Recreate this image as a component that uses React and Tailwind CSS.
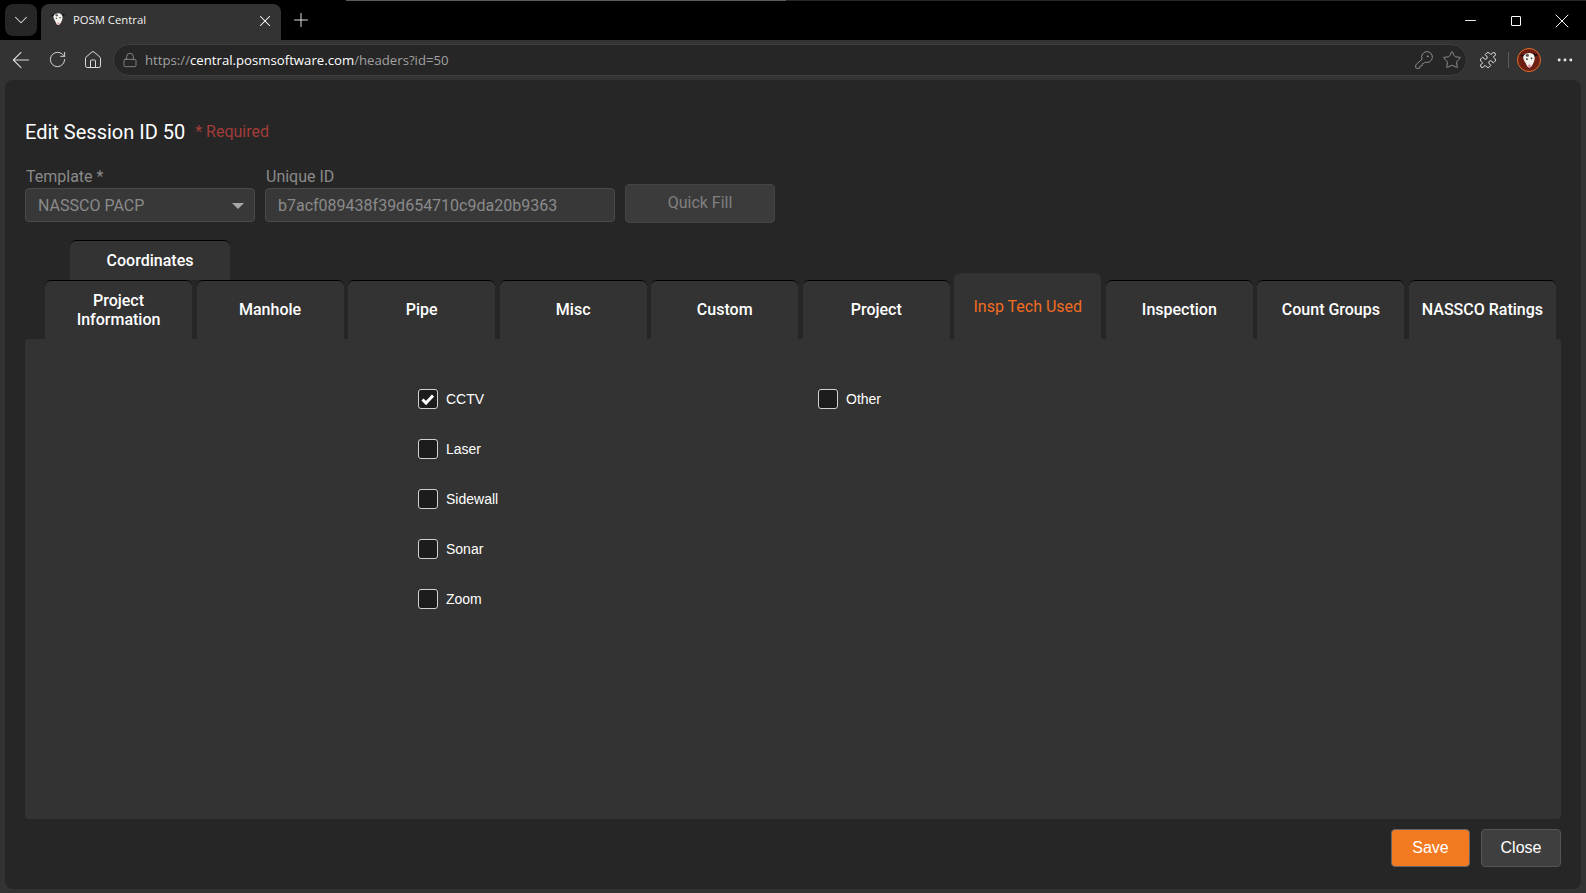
import { ArrowLeft, ChevronDown, Ellipsis, House, KeyRound, Lock, Minus, Plus, Puzzle, RotateCw, Star, X } from 'lucide-react';

/* ── Data ─────────────────────────────────────────────── */
const TABS = [
  { label: 'Project Information', wraps: true },
  { label: 'Manhole' },
  { label: 'Pipe' },
  { label: 'Misc' },
  { label: 'Custom' },
  { label: 'Project' },
  { label: 'Insp Tech Used', active: true },
  { label: 'Inspection' },
  { label: 'Count Groups' },
  { label: 'NASSCO Ratings' },
];

const LEFT_CHECKS = [
  { label: 'CCTV', checked: true },
  { label: 'Laser' },
  { label: 'Sidewall' },
  { label: 'Sonar' },
  { label: 'Zoom' },
];

/* ── Possum face, used for favicon and profile ────────── */
const Possum = ({ className }) => (
  <svg viewBox="0 0 24 24" className={className}>
    <path d="M1 7 L6 5 L7 9 Z" fill="#111" />
    <path d="M23 6 L17 4 L17 9 Z" fill="#111" />
    <path d="M5 8 C7 3 15 2 18 6 C20 10 18 15 16 18 C14 22 11 22 9.5 19 C8 15 5 12 5 8 Z" fill="#f4f1ec" />
    <ellipse cx="10" cy="6.5" rx="2" ry="1.6" fill="#555" />
    <circle cx="9.5" cy="11" r="1" fill="#222" />
    <circle cx="15" cy="10" r="1" fill="#222" />
    <circle cx="12.5" cy="19" r="1.7" fill="#e58fa0" />
  </svg>
);

/* ── Browser chrome ───────────────────────────────────── */
const TabStrip = () => (
  <div className="h-10 shrink-0 bg-black flex flex-col">
    {/* Strip of another window peeking in above the tabs */}
    <div className="h-px shrink-0 flex bg-[#262626]">
      <div className="w-[346px] bg-black" />
      <div className="w-[440px] bg-[#5c5c5c]" />
    </div>
    <div className="flex-1 flex items-start">
      <div className="ml-[5px] mt-[3px] w-[32px] h-[32px] rounded-lg bg-[#262626] flex items-center justify-center">
        <ChevronDown size={22} strokeWidth={1.1} className="text-[#e0e0e0]" />
      </div>
      <div className="ml-[4px] mt-[3px] w-[240px] h-9 rounded-t-lg bg-[#333333] flex items-center pl-[9px] pr-[7px] pb-[3px]">
        <Possum className="w-[16px] h-[16px] -mt-[3px]" />
        <span className="ml-[7px] flex-1 text-[11.3px] text-[#f0f0f0] font-['Open_Sans',sans-serif]">POSM Central</span>
        <X size={18} strokeWidth={1.4} className="text-white" />
      </div>
      <div className="ml-[8px] mt-[7px] w-[24px] h-[24px] flex items-center justify-center">
        <Plus size={22} strokeWidth={1.1} className="text-[#e0e0e0]" />
      </div>
      <div className="ml-auto flex items-center h-[39px] text-white">
        <div className="w-[46px] flex justify-center"><Minus size={17} strokeWidth={1.3} /></div>
        <div className="w-[46px] flex justify-center">
          <div className="w-[10px] h-[10px] border border-white rounded-[1px]" />
        </div>
        <div className="w-[46px] mr-[1px] flex justify-center"><X size={24} strokeWidth={1} /></div>
      </div>
    </div>
  </div>
);

const Toolbar = () => (
  <div className="h-[39px] shrink-0 bg-[#333333] flex items-center text-[#dcdcdc]">
    <div className="w-[41px] flex justify-center"><ArrowLeft size={26} strokeWidth={1} /></div>
    <div className="w-[32px] flex justify-center"><RotateCw size={19} strokeWidth={1.2} /></div>
    <div className="w-[40px] flex justify-center"><House size={20} strokeWidth={1.2} /></div>
    <div className="w-[1354px] h-[32px] rounded-full bg-[#262626] border border-[#3f3f3f] flex items-center">
      <div className="w-[31px] flex justify-center"><Lock size={16} strokeWidth={1.1} className="text-[#a0a0a0]" /></div>
      <span className="flex-1 pt-[2px] text-[13.2px] text-[#a0a0a0] font-['Open_Sans',sans-serif]">
        https://<span className="text-white">central.posmsoftware.com</span>/headers?id=50
      </span>
      <div className="w-[28px] flex justify-center"><KeyRound size={20} strokeWidth={1} className="text-[#a0a0a0]" /></div>
      <div className="w-[28px] flex justify-center"><Star size={20} strokeWidth={1} className="text-[#a0a0a0]" /></div>
    </div>
    <div className="w-[41px] flex justify-center"><Puzzle size={18} strokeWidth={1.2} className="text-[#f0f0f0]" /></div>
    <div className="w-px h-[16px] bg-[#5a5a5a]" />
    <div className="w-[40px] flex justify-center">
      <div className="w-[24px] h-[24px] rounded-full bg-[#6e1f14] border border-[#e0702a] flex items-center justify-center">
        <Possum className="w-[20px] h-[20px]" />
      </div>
    </div>
    <div className="w-[32px] flex justify-center"><Ellipsis size={20} strokeWidth={1.5} className="text-[#f0f0f0]" /></div>
  </div>
);

/* ── Form bits ────────────────────────────────────────── */
const Field = ({ label, className, children }) => (
  <div className={className}>
    <div className="h-[20px] leading-[20px] pl-[1px] text-[16px] text-[#8a8a8a]">{label}</div>
    {children}
  </div>
);

const Check = ({ label, checked }) => (
  <label className="h-[20px] flex items-center">
    <span className="shrink-0 w-[20px] h-[20px] rounded-[3px] border border-[#d0d0d0] bg-[#1c1c1c] flex items-center justify-center">
      {checked && (
        <svg viewBox="0 0 14 14" className="w-[14px] h-[14px]">
          <path d="M1.5 7.5 L5 11 L12 3.5" fill="none" stroke="#fff" strokeWidth="3" />
        </svg>
      )}
    </span>
    <span className="ml-[8px] text-[14px] text-white font-['Liberation_Sans',sans-serif]">{label}</span>
  </label>
);

const Tab = ({ label, active, wraps }) => (
  <div
    className={`${active ? 'h-[66px] text-[#f26c22] border-t-[#2f2f2f]' : 'h-[59px] text-white font-[470] border-t-black'} ${wraps || active ? '' : 'pb-[2px]'}
      flex-1 min-w-0 rounded-t-[6px] border-t bg-[#333333] flex items-center justify-center text-center text-[16px] leading-[19px] px-3`}
  >
    {label}
  </div>
);

/* ── App ──────────────────────────────────────────────── */
export default function App() {
  return (
    <div className="w-[1586px] h-[893px] overflow-hidden flex flex-col bg-[#333333] font-['Roboto',sans-serif]">
      <TabStrip />
      <Toolbar />

      <main className="flex-1 mx-[5px] mt-[1px] mb-[4px] rounded-[8px] bg-[#262626] pl-[20px] pr-[20px] flex flex-col">
        <div className="mt-[39px] h-[26px] flex items-center">
          <h1 className="text-[20px] text-white">Edit Session ID 50</h1>
          <span className="ml-[10px] text-[16px] text-[#a33c38]">* Required</span>
        </div>

        <div className="mt-[22px] flex items-end">
          <Field label="Template *" className="w-[230px]">
            <div className="mt-[1px] h-[34px] pt-[2px] rounded-[4px] bg-[#383838] border border-[#4a4a4a] pl-[12px] pr-[10px] flex items-center justify-between text-[16px] text-[#8a8a8a]">
              NASSCO PACP
              <span className="w-0 h-0 border-x-[6px] border-x-transparent border-t-[6px] border-t-[#a8a8a8]" />
            </div>
          </Field>
          <Field label="Unique ID" className="ml-[10px] w-[350px]">
            <div className="mt-[1px] h-[34px] pt-[2px] rounded-[4px] bg-[#383838] border border-[#4a4a4a] px-[12px] flex items-center text-[16px] text-[#8a8a8a]">
              b7acf089438f39d654710c9da20b9363
            </div>
          </Field>
          <button className="ml-[10px] w-[150px] h-[39px] mb-[-1px] rounded-[4px] bg-[#3b3b3b] border border-[#444444] text-[16px] text-[#808080] pb-[1px]">
            Quick Fill
          </button>
        </div>

        <div className="mt-[18px] ml-[45px] w-[160px] h-[40px] rounded-t-[6px] border-t border-t-black bg-[#333333] flex items-center justify-center text-[16px] font-[470] text-white">
          Coordinates
        </div>

        <div className="h-[59px] flex items-end gap-[4.5px] ml-[20px] mr-[5px]">
          {TABS.map((tab) => <Tab key={tab.label} {...tab} />)}
        </div>

        <section className="flex-1 rounded-[4px] bg-[#333333] pt-[50px] pl-[393px] flex">
          <div className="w-[400px] flex flex-col gap-[30px] whitespace-nowrap">
            {LEFT_CHECKS.map((c) => <Check key={c.label} {...c} />)}
          </div>
          <div className="whitespace-nowrap">
            <Check label="Other" />
          </div>
        </section>

        <footer className="h-[70px] shrink-0 flex items-start justify-end gap-[11px] pt-[10px] font-['Liberation_Sans',sans-serif]">
          <button className="w-[79px] h-[38px] rounded-[4px] bg-[#f37a21] border border-[#666666] text-[16px] text-white">Save</button>
          <button className="w-[80px] h-[38px] rounded-[4px] bg-[#3f3f3f] border border-[#555555] text-[16px] text-white">Close</button>
        </footer>
      </main>
    </div>
  );
}
